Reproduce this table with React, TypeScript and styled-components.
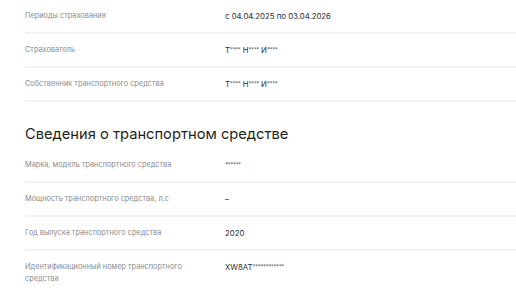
import React from 'react';
import styled, { createGlobalStyle } from 'styled-components';

const GlobalStyle = createGlobalStyle`
  html, body {
    margin: 0;
    padding: 0;
    background: #ffffff;
  }
  body {
    font-family: Inter, "Noto Sans", "Liberation Sans", sans-serif;
    -webkit-font-smoothing: antialiased;
  }
`;

const Page = styled.div`
  padding: 0 0 0 25px;
  overflow: hidden;
`;

const Section = styled.section`
  display: flex;
  flex-direction: column;
`;

const SectionTitle = styled.h2`
  margin: 22px 0 5px;
  font-size: 14.7px;
  line-height: 20px;
  font-weight: 400;
  color: #1f1f22;
`;

const Row = styled.div<{ last?: boolean }>`
  display: grid;
  grid-template-columns: 200px 1fr;
  align-items: center;
  min-height: 32px;
  border-bottom: ${p => (p.last ? 'none' : '2px solid #f1f1f3')};
`;

const Label = styled.div<{ tight?: boolean }>`
  font-size: 7.35px;
  line-height: 12px;
  color: #8b8b90;
  padding-right: 20px;
  padding-top: ${p => (p.tight ? '10px' : '0')};
`;

const Value = styled.div<{ tight?: boolean }>`
  font-size: 7.8px;
  line-height: 12px;
  color: #2e2e32;
  align-self: ${p => (p.tight ? 'start' : 'center')};
  padding-top: ${p => (p.tight ? '10px' : '0')};
`;

// hidden characters are printed as small raised stars
const Mask = styled.span`
  font-size: 6px;
  letter-spacing: -0.4px;
  vertical-align: 1px;
  color: #55555a;
`;

interface Field {
  label: string;
  value: string;
}

const policy: Field[] = [
  { label: 'Периоды страхования', value: 'с 04.04.2025 по 03.04.2026' },
  { label: 'Страхователь', value: 'Т**** Н**** И****' },
  { label: 'Собственник транспортного средства', value: 'Т**** Н**** И****' },
];

const vehicle: Field[] = [
  { label: 'Марка, модель транспортного средства', value: '******' },
  { label: 'Мощность транспортного средства, л.с', value: '–' },
  { label: 'Год выпуска транспортного средства', value: '2020' },
  { label: 'Идентификационный номер транспортного средства', value: 'XW8AT************' },
];

const renderValue = (value: string) =>
  value.split(/(\*+)/).map((part, i) =>
    part.startsWith('*') ? <Mask key={i}>{part}</Mask> : <React.Fragment key={i}>{part}</React.Fragment>
  );

const App: React.FC = () => {
  return (
    <Page>
      <GlobalStyle />
      <Section>
        {policy.map(f => (
          <Row key={f.label}>
            <Label>{f.label}</Label>
            <Value>{renderValue(f.value)}</Value>
          </Row>
        ))}
      </Section>

      <Section>
        <SectionTitle>Сведения о транспортном средстве</SectionTitle>
        {vehicle.map((f, i) => {
          const last = i === vehicle.length - 1;
          return (
            <Row key={f.label} last={last}>
              <Label tight={last}>{f.label}</Label>
              <Value tight={last}>{renderValue(f.value)}</Value>
            </Row>
          );
        })}
      </Section>
    </Page>
  );
};

export default App;
